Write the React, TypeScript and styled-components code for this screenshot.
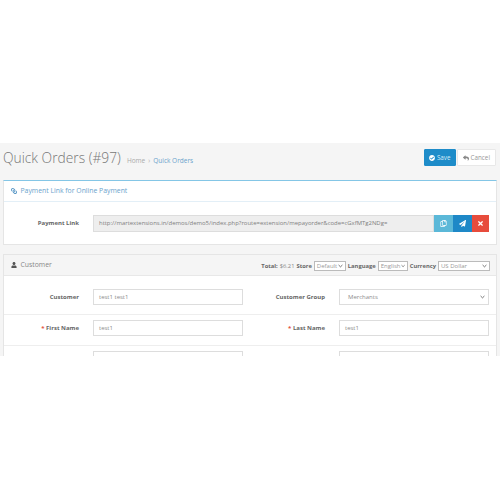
import React from "react";
import styled, { createGlobalStyle } from "styled-components";
import { FaCheckCircle, FaLink, FaPaperPlane, FaRegCopy, FaReply, FaTimes, FaUser } from "react-icons/fa";

const Global = createGlobalStyle`
  html, body { margin: 0; padding: 0; background: #fff; }
  body { font-family: "Open Sans", "Liberation Sans", sans-serif; }
`;

const Page = styled.div`
  width: 500px;
  height: 500px;
  padding-top: 143px;
  box-sizing: border-box;
  background: #fff;
  overflow: hidden;
`;

const Band = styled.div`
  height: 213px;
  background: #f5f5f5;
  overflow: hidden;
  padding: 0 3px;
  box-sizing: border-box;
`;

const Header = styled.div`
  height: 29px;
  margin-bottom: 8px;
  display: flex;
  align-items: center;
  justify-content: space-between;
`;

const TitleGroup = styled.div`
  display: flex;
  align-items: baseline;
  gap: 6px;
`;

const Title = styled.h1`
  margin: 0;
  font-size: 13.8px;
  font-weight: 300;
  color: #777;
  white-space: nowrap;
`;

const Crumbs = styled.div`
  font-size: 6.5px;
  color: #aaa;
  display: flex;
  gap: 3px;
`;

const CrumbLink = styled.span`
  color: #6ba3cc;
`;

const Actions = styled.div`
  display: flex;
  margin-right: 1px;
  gap: 1px;
`;

const ActionButton = styled.div<{ $primary?: boolean }>`
  height: 17px;
  box-sizing: border-box;
  width: ${(p) => (p.$primary ? "32px" : "39px")};
  display: flex;
  align-items: center;
  justify-content: center;
  gap: 1.5px;
  font-size: 6.3px;
  border: 1px solid ${(p) => (p.$primary ? "#1e8cc9" : "#e8e8e8")};
  background: ${(p) => (p.$primary ? "#1e8cc9" : "#fff")};
  color: ${(p) => (p.$primary ? "#d5ebf7" : "#999")};
  border-radius: 1px;
`;

const Panel = styled.section<{ $accent?: boolean }>`
  background: #fff;
  border: 1px solid #e5e5e5;
  border-top: 1px solid ${(p) => (p.$accent ? "#84c6e6" : "#e5e5e5")};
  margin-bottom: 9px;
`;

const PanelHeading = styled.div<{ $tint?: boolean }>`
  height: 19.5px;
  display: flex;
  align-items: center;
  justify-content: space-between;
  padding: 0 6px 0 7px;
  font-size: 6.85px;
  color: ${(p) => (p.$tint ? "#6ba3cc" : "#888")};
  background: ${(p) => (p.$tint ? "#fff" : "#f5f5f5")};
  border-bottom: 1px solid ${(p) => (p.$tint ? "#e3eff7" : "#e8e8e8")};
`;

const HeadingLabel = styled.div`
  display: flex;
  align-items: center;
  gap: 3.5px;
`;

const LinkIcon = styled(FaLink)`
  width: 6px;
  height: 6px;
  color: #5a98c6;
  transform: scaleX(-1);
`;

const UserIcon = styled(FaUser)`
  width: 6px;
  height: 6px;
  color: #555;
`;

const Row = styled.div`
  display: grid;
  grid-template-columns: 75px 1fr;
  column-gap: 14px;
  align-items: center;
  padding: 13px 7px 12.5px 0;
`;

const Label = styled.label`
  text-align: right;
  font-size: 6px;
  font-weight: 700;
  color: #666;
  white-space: nowrap;
`;

const LinkGroup = styled.div`
  display: flex;
  align-items: stretch;
  height: 17px;
`;

const LinkInput = styled.div`
  flex: 1;
  background: #eee;
  border: 1px solid #ddd;
  font-size: 5.95px;
  color: #808080;
  padding-left: 5px;
  display: flex;
  align-items: center;
  white-space: nowrap;
  overflow: hidden;
`;

const IconButton = styled.div<{ $color: string; $w: number }>`
  width: ${(p) => p.$w}px;
  display: flex;
  align-items: center;
  justify-content: center;
  background: ${(p) => p.$color};
  color: #fff;
  font-size: 7px;
`;

const Meta = styled.div`
  display: flex;
  align-items: center;
  gap: 2px;
  font-size: 5.8px;
  color: #888;
  padding-top: 2px;
`;

const MetaLabel = styled.span`
  font-weight: 700;
  color: #666;
`;

const TinySelect = styled.div<{ $w: number }>`
  width: ${(p) => p.$w}px;
  height: 9.5px;
  box-sizing: border-box;
  border: 1px solid #bbb;
  background: #fff;
  color: #999;
  font-size: 6px;
  display: flex;
  align-items: center;
  justify-content: space-between;
  padding: 0 2px;
`;

const FormRow = styled.div<{ $last?: boolean }>`
  display: grid;
  grid-template-columns: 246px 1fr;
  height: 31px;
  box-sizing: border-box;
  padding-top: 5px;
  border-bottom: 1px solid ${(p) => (p.$last ? "transparent" : "#eee")};
`;

const Field = styled.div`
  display: grid;
  grid-template-columns: 75px 150px;
  column-gap: 14px;
  align-items: center;
  height: 16.5px;
`;

const Required = styled.span`
  color: #e3503e;
`;

const FieldInput = styled.div<{ $select?: boolean }>`
  height: 16.5px;
  box-sizing: border-box;
  border: 1px solid #ddd;
  background: #fff;
  font-size: 6px;
  color: #8c8c8c;
  padding: 0 3px 0 ${(p) => (p.$select ? "8px" : "5px")};
  display: flex;
  align-items: center;
  justify-content: space-between;
`;

const FormBody = styled.div`
  padding-top: 8px;
`;

const Chevron = () => (
  <svg width="5" height="4" viewBox="0 0 6 4" fill="none" stroke="#666" strokeWidth="1.1">
    <path d="M.7.8 3 3 5.3.8" />
  </svg>
);

export default function App() {
  return (
    <Page>
      <Global />
      <Band>
        <Header>
          <TitleGroup>
            <Title>Quick Orders (#97)</Title>
            <Crumbs>
              <span>Home</span>
              <span>›</span>
              <CrumbLink>Quick Orders</CrumbLink>
            </Crumbs>
          </TitleGroup>
          <Actions>
            <ActionButton $primary>
              <FaCheckCircle size={6} color="#fff" />
              Save
            </ActionButton>
            <ActionButton>
              <FaReply size={6} color="#888" />
              Cancel
            </ActionButton>
          </Actions>
        </Header>

        <Panel $accent>
          <PanelHeading $tint>
            <HeadingLabel>
              <LinkIcon />
              Payment Link for Online Payment
            </HeadingLabel>
          </PanelHeading>
          <Row>
            <Label>Payment Link</Label>
            <LinkGroup>
              <LinkInput>
                http://martextensions.in/demos/demo5/index.php?route=extension/mepayorder&amp;code=cGxfMTg2NDg=
              </LinkInput>
              <IconButton $color="#5bb8d8" $w={19}>
                <FaRegCopy />
              </IconButton>
              <IconButton $color="#1e88c7" $w={19}>
                <FaPaperPlane />
              </IconButton>
              <IconButton $color="#e74c3c" $w={17}>
                <FaTimes />
              </IconButton>
            </LinkGroup>
          </Row>
        </Panel>

        <Panel>
          <PanelHeading>
            <HeadingLabel>
              <UserIcon />
              Customer
            </HeadingLabel>
            <Meta>
              <MetaLabel>Total:</MetaLabel> $6.21
              <MetaLabel>Store</MetaLabel>
              <TinySelect $w={32}>Default <Chevron /></TinySelect>
              <MetaLabel>Language</MetaLabel>
              <TinySelect $w={30}>English <Chevron /></TinySelect>
              <MetaLabel>Currency</MetaLabel>
              <TinySelect $w={52}>US Dollar <Chevron /></TinySelect>
            </Meta>
          </PanelHeading>
          <FormBody>
            <FormRow>
              <Field>
                <Label>Customer</Label>
                <FieldInput>test1 test1</FieldInput>
              </Field>
              <Field>
                <Label>Customer Group</Label>
                <FieldInput $select>Merchants <Chevron /></FieldInput>
              </Field>
            </FormRow>
            <FormRow>
              <Field>
                <Label><Required>*</Required> First Name</Label>
                <FieldInput>test1</FieldInput>
              </Field>
              <Field>
                <Label><Required>*</Required> Last Name</Label>
                <FieldInput>test1</FieldInput>
              </Field>
            </FormRow>
            <FormRow $last>
              <Field>
                <Label />
                <FieldInput />
              </Field>
              <Field>
                <Label />
                <FieldInput />
              </Field>
            </FormRow>
          </FormBody>
        </Panel>
      </Band>
    </Page>
  );
}
